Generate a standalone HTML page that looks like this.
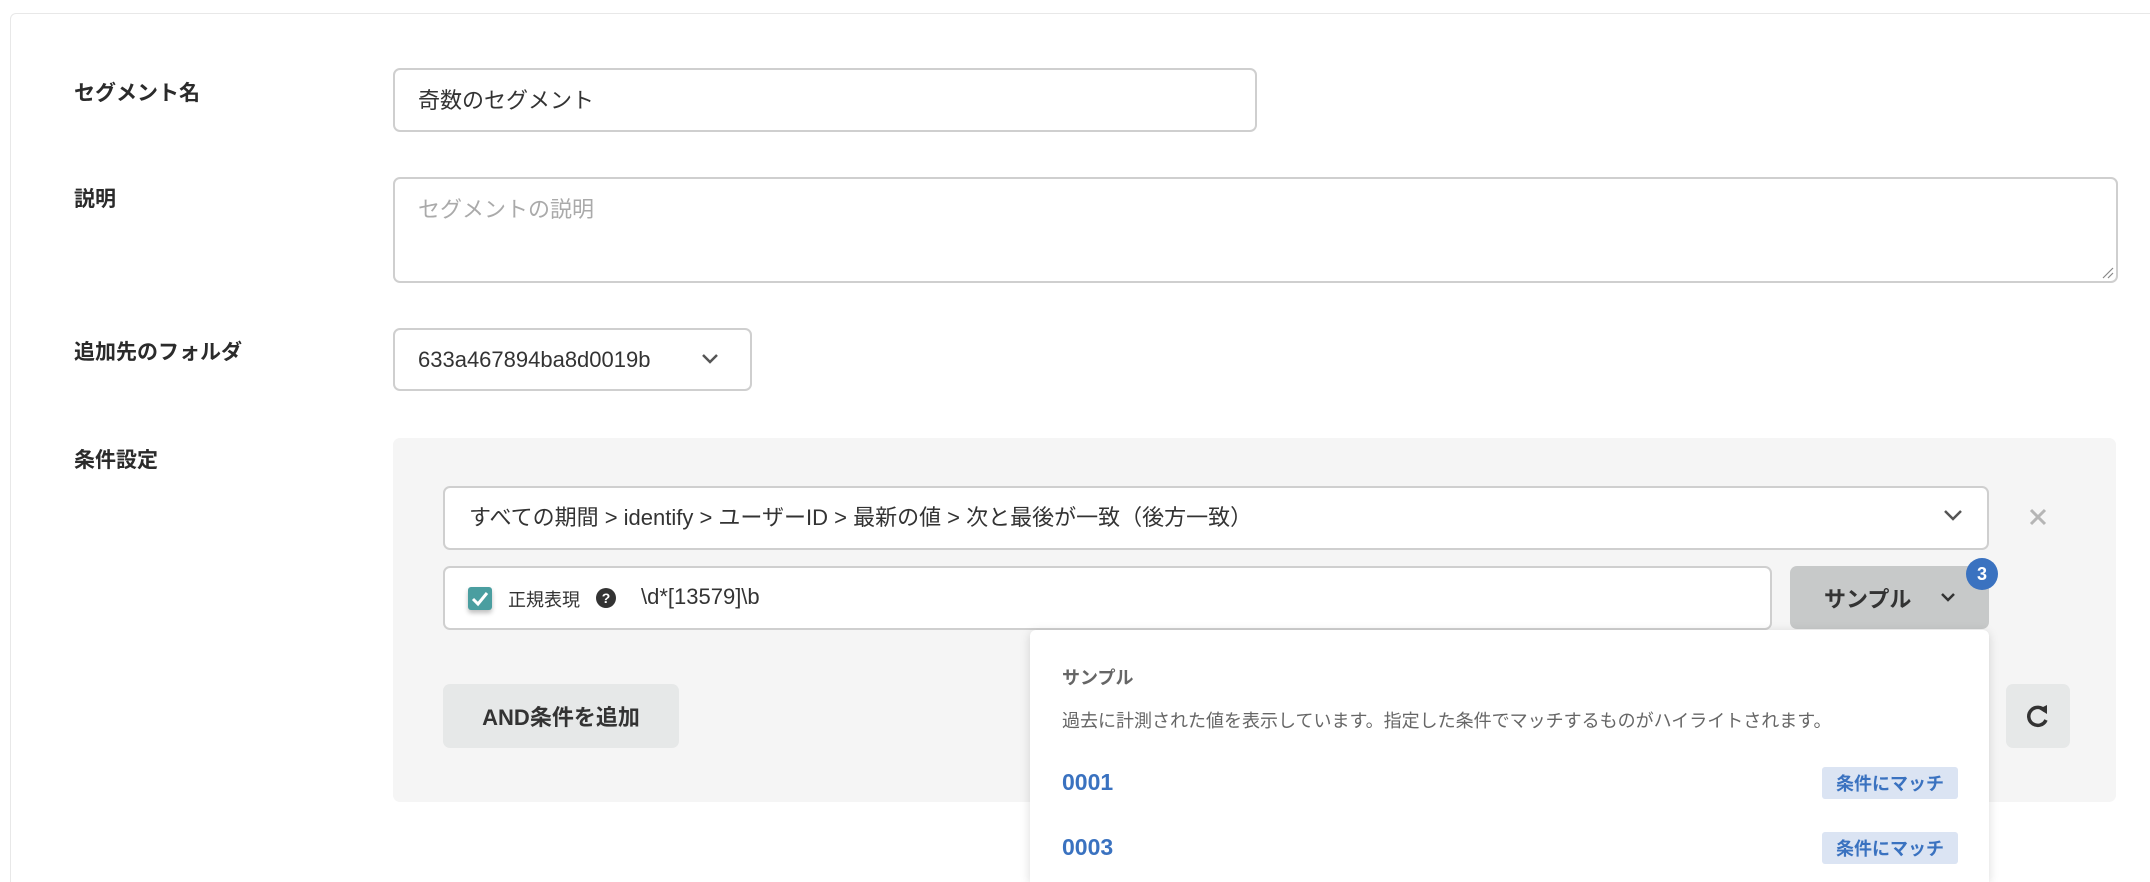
<!DOCTYPE html>
<html style="width:2150px;height:882px;overflow:hidden"><head><meta charset="utf-8"><style>
*{box-sizing:border-box;margin:0;padding:0}
body{width:2150px;height:882px;overflow:hidden;background:#fff;font-family:"Liberation Sans","Noto Sans CJK JP",sans-serif;color:#333;position:relative}
.a{position:absolute}
.card{left:10px;top:13px;width:2150px;height:880px;border:1px solid #e8e8e8;border-radius:6px}
.lbl{font-size:21px;font-weight:bold;color:#2b2b2b;left:74px}
.inp{background:#fff;border:2px solid #cfcfcf;border-radius:7px;font-size:22px;color:#333}
.panel{left:393px;top:438px;width:1723px;height:364px;background:#f5f5f5;border-radius:7px}
.btn{background:#e6e8e8;border-radius:7px;font-weight:bold;font-size:22px;color:#333;display:flex;align-items:center;justify-content:center}
.tag{left:1822px;width:136px;height:32px;background:#dbe4f3;color:#3a72c0;font-size:18px;font-weight:bold;display:flex;align-items:center;justify-content:center;border-radius:3px}
.num{left:1062px;font-size:23px;font-weight:bold;color:#3a72c0}
</style></head><body>
<div class="a card"></div>
<div class="a lbl" style="top:77px">セグメント名</div>
<div class="a inp" style="left:393px;top:68px;width:864px;height:64px;padding:18px 23px;line-height:26px">奇数のセグメント</div>
<div class="a lbl" style="top:183px">説明</div>
<div class="a inp" style="left:393px;top:177px;width:1725px;height:106px;padding:18px 23px;line-height:26px;color:#aaa">セグメントの説明</div>
<svg class="a" style="left:2100px;top:265px" width="14" height="14"><path d="M3 13L13 3M8 13L13 8" stroke="#888" stroke-width="1.2"/></svg>
<div class="a lbl" style="top:336px">追加先のフォルダ</div>
<div class="a inp" style="left:393px;top:328px;width:359px;height:63px;padding:17px 23px;line-height:26px;white-space:nowrap;overflow:hidden">633a467894ba8d0019b</div>
<svg class="a" style="left:700px;top:352px" width="20" height="14"><path d="M3 3l7 7 7-7" stroke="#555" stroke-width="2.5" fill="none"/></svg>
<div class="a lbl" style="top:444px">条件設定</div>
<div class="a panel"></div>
<div class="a inp" style="left:443px;top:486px;width:1546px;height:64px;padding:17px 24px;line-height:26px">すべての期間 &gt; identify &gt; ユーザーID &gt; 最新の値 &gt; 次と最後が一致（後方一致）</div>
<svg class="a" style="left:1942px;top:508px" width="22" height="16"><path d="M3 3l8 8 8-8" stroke="#555" stroke-width="2.5" fill="none"/></svg>
<svg class="a" style="left:2028px;top:507px" width="20" height="20"><path d="M3 3L17 17M17 3L3 17" stroke="#b5b5b5" stroke-width="3"/></svg>
<div class="a inp" style="left:443px;top:566px;width:1329px;height:64px"></div>
<div class="a" style="left:468px;top:587px;width:24px;height:23px;background:#4a9ea0;border-radius:3px;box-shadow:0 3px 5px rgba(0,0,0,.25)"><svg width="24" height="23"><path d="M5 12l5 5 9-11" stroke="#fff" stroke-width="3" fill="none"/></svg></div>
<div class="a" style="left:508px;top:586px;font-size:18px;color:#333">正規表現</div>
<div class="a" style="left:596px;top:588px;width:20px;height:20px;border-radius:50%;background:#333;color:#fff;font-size:14px;font-weight:bold;text-align:center;line-height:20px">?</div>
<div class="a" style="left:641px;top:584px;font-size:22px;color:#333">\d*[13579]\b</div>
<div class="a btn" style="left:1790px;top:566px;width:199px;height:63px;background:#c7c9c9;justify-content:flex-start;padding-left:34px">サンプル</div>
<svg class="a" style="left:1940px;top:592px" width="16" height="12"><path d="M2 2l6 6 6-6" stroke="#333" stroke-width="2.5" fill="none"/></svg>
<div class="a" style="left:1966px;top:558px;width:32px;height:32px;border-radius:50%;background:#3a72c0;color:#fff;font-weight:bold;font-size:18px;text-align:center;line-height:32px">3</div>
<div class="a btn" style="left:443px;top:684px;width:236px;height:64px">AND条件を追加</div>
<div class="a btn" style="left:2006px;top:684px;width:64px;height:64px"><svg width="26" height="26" viewBox="0 0 26 26"><path d="M20 8A9 9 0 1 0 21 17" stroke="#333" stroke-width="3.5" fill="none"/><path d="M14 6L22 2L22 11Z" fill="#333"/></svg></div>
<div class="a" style="left:1030px;top:630px;width:959px;height:252px;background:#fff;border-radius:6px 6px 0 0;box-shadow:0 2px 10px rgba(0,0,0,.15)"></div>
<div class="a" style="left:1062px;top:664px;font-size:18px;font-weight:bold;color:#666">サンプル</div>
<div class="a" style="left:1062px;top:707px;font-size:18px;color:#666">過去に計測された値を表示しています。指定した条件でマッチするものがハイライトされます。</div>
<div class="a num" style="top:769px">0001</div>
<div class="a tag" style="top:767px">条件にマッチ</div>
<div class="a num" style="top:834px">0003</div>
<div class="a tag" style="top:832px">条件にマッチ</div>
</body></html>
